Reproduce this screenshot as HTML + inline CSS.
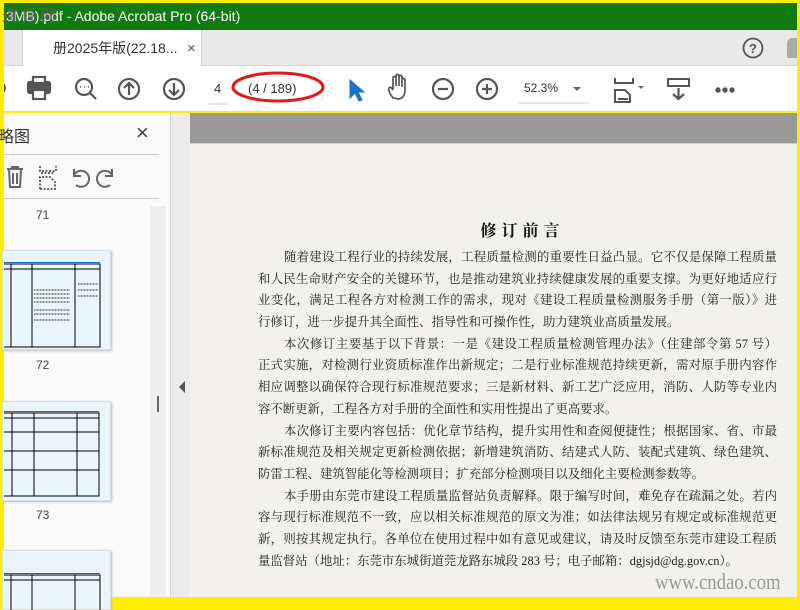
<!DOCTYPE html>
<html><head><meta charset="utf-8"><style>
*{margin:0;padding:0;box-sizing:border-box}
body{width:800px;height:600px;overflow:hidden;background:#ffee00;position:relative;font-family:"Liberation Sans","Noto Sans CJK SC",sans-serif}
.abs{position:absolute}
#title{left:4px;top:3px;width:793px;height:27px;background:#117a11;color:#fff;font-size:14px;line-height:27px;padding-left:2px}
#tabs{left:4px;top:30px;width:793px;height:36px;background:#e9e9e9;border-bottom:1px solid #d4d4d4}
#tab{left:18px;top:0;width:180px;height:36px;background:#fff;border-left:1px solid #d0d0d0;border-right:1px solid #d0d0d0;font-size:14px;color:#333;line-height:37px;padding-left:30px}
#tool{left:4px;top:66px;width:793px;height:46px;background:#fff;border-bottom:1px solid #d8d8d8}
#side{left:4px;top:113px;width:166px;height:484px;background:#fafafa}
#strip{left:170px;top:113px;width:20px;height:484px;background:#ebebeb;border-left:1px solid #d0d0d0}
#doc{left:190px;top:113px;width:607px;height:484px;background:#f2f1ee}
#band{left:190px;top:113px;width:607px;height:31px;background:#999;border-bottom:1px solid #ccc}
.txt{font-family:"Liberation Serif","Noto Serif CJK SC",serif;font-size:12.4px;color:#222;width:519px;left:258px;letter-spacing:0}
.l{height:21.7px;line-height:21.7px;text-align:justify;text-align-last:justify;white-space:nowrap;overflow:hidden}
.n{text-align-last:left}
.th{background:#e9f5fc;border:1px solid #ddd;box-shadow:1px 1px 2px #bbb}
.num{font-size:12px;color:#444}
</style></head><body>
<div id="title" class="abs">3MB).pdf - Adobe Acrobat Pro (64-bit)</div>
<div id="tabs" class="abs"><div id="tab" class="abs">册2025年版(22.18... <span style="position:absolute;left:164px;top:0;font-size:15px;color:#555">×</span></div>
<svg class="abs" style="left:738px;top:7px" width="22" height="22"><circle cx="11" cy="11" r="9.5" fill="none" stroke="#555" stroke-width="1.8"/><text x="11" y="16" font-size="13" text-anchor="middle" fill="#555" font-family="Liberation Sans" font-weight="bold">?</text></svg>
<div class="abs" style="left:783px;top:8px;width:10px;height:20px;background:#aaa;border-radius:5px 0 0 2px"></div>
</div>
<div id="tool" class="abs">
<svg class="abs" style="left:0;top:0" width="793" height="46" fill="none" stroke="#555" stroke-width="2.2">
<path d="M-2 17 a6 6 0 0 1 0 10" />
<rect x="24" y="16" width="22" height="11" rx="2" fill="#555"/><rect x="29" y="11" width="12" height="6" fill="#fff"/><rect x="29" y="24" width="12" height="9" fill="#fff"/>
<circle cx="80" cy="21" r="8"/><path d="M86 27 l6 6"/><path d="M76 21h1M80 21h1M84 21h1" stroke-width="1.5"/>
<circle cx="125" cy="23" r="10"/><path d="M125 29v-12M120 22l5-5 5 5"/>
<circle cx="170" cy="23" r="10"/><path d="M170 17v12M165 24l5 5 5-5"/>
<path d="M205 38h18" stroke="#ccc" stroke-width="1"/>
<path d="M318 12v24" stroke="#ddd" stroke-width="1"/>
<path d="M346 14v18l5-5 4 8 3-1-4-8h6z" fill="#1a73c8" stroke="#1a73c8" stroke-width="1"/>
<path d="M389 32c-3-4-5-8-4-10s3 0 4 2v-12c0-2 3-2 3 0v8v-10c0-2 3-2 3 0v10v-9c0-2 3-2 3 0v10v-7c0-2 3-2 3 0v10c0 5-2 8-6 9z" stroke-width="1.7"/>
<circle cx="439" cy="23" r="10"/><path d="M434 23h10"/>
<circle cx="483" cy="23" r="10"/><path d="M478 23h10M483 18v10"/>
<path d="M515 37h70" stroke="#ccc" stroke-width="1"/>
<path d="M569 21l4 4 4-4z" fill="#666" stroke="none"/>
<path d="M611 12v5h18v-5M611 36v-12h10l5 5v7h-15zM614 33h10" stroke-width="2"/>
<path d="M634 20l3 3 3-3z" fill="#666" stroke="none"/>
<rect x="664" y="13" width="21" height="7" stroke-width="2"/><path d="M674.5 22v11M669 28l5.5 5 5.5-5"/>
<circle cx="714" cy="24" r="1.6" fill="#555"/><circle cx="721" cy="24" r="1.6" fill="#555"/><circle cx="728" cy="24" r="1.6" fill="#555"/>
</svg>
<div class="abs" style="left:210px;top:15px;font-size:13px;color:#333">4</div>
<div class="abs" style="left:244px;top:15px;font-size:13px;color:#333">(4 / 189)</div>
<div class="abs" style="left:520px;top:15px;font-size:12px;color:#333">52.3%</div>
<svg class="abs" style="left:226px;top:3px" width="96" height="36"><ellipse cx="48" cy="18" rx="45" ry="14" fill="none" stroke="#e0191b" stroke-width="3"/></svg>
</div>
<div class="abs" style="left:2px;top:2px;font-size:16px;color:rgba(120,90,130,.55);font-weight:bold;font-family:'Noto Sans CJK SC',sans-serif;letter-spacing:3px">道标网</div>
<div id="side" class="abs">
<div class="abs" style="left:-6px;top:10px;font-size:16px;color:#333">略图</div>
<div class="abs" style="left:132px;top:7px;font-size:22px;color:#444">×</div>
<div class="abs" style="left:0;top:41px;width:155px;height:1px;background:#ccc"></div>
<svg class="abs" style="left:0;top:50px" width="140" height="30" fill="none" stroke="#666" stroke-width="2">
<path d="M3 6h16M8 6v-2h6v2M5 6l1 18h10l1-18M9 10v11M13 10v11"/>
<path d="M36 3v5h16v-5M36 26v-12h10l5 5v7h-15zM37 10h14" stroke-dasharray="2 1.5"/>
<path d="M72 22a8 8 0 1 0 -2 -10M70 6v7h7"/>
<path d="M106 22a8 8 0 1 1 2 -10M108 6v7h-7"/>
</svg>
<div class="abs" style="left:0;top:85px;width:155px;height:1px;background:#ccc"></div>
<div class="abs" style="left:146px;top:93px;width:16px;height:391px;background:#f0efed"></div>
<div class="abs" style="left:153px;top:283px;width:2px;height:16px;background:#666"></div>
<div class="abs num" style="left:32px;top:95px">71</div>
<div class="abs th" style="left:-2px;top:137px;width:109px;height:100px"></div>
<div class="abs num" style="left:32px;top:245px">72</div>
<div class="abs th" style="left:-2px;top:288px;width:109px;height:100px"></div>
<div class="abs num" style="left:32px;top:395px">73</div>
<div class="abs th" style="left:-2px;top:437px;width:109px;height:60px"></div>
<svg class="abs" style="left:0;top:137px" width="110" height="360" fill="none" stroke="#000" stroke-width="1">
<path d="M0 14h96v83h-96M7 14v83M28 14v83M71 14v83M0 19h96" /><path d="M0 12.5h96" stroke="#1a6fc0"/>
<path d="M30 40h36M30 44h36M30 48h36M30 52h36M30 60h36M30 64h36M30 70h36M74 34h20M74 40h20M74 46h20" stroke="#555" stroke-width="1.2" stroke-dasharray="1 .5"/>
<path d="M0 163h95v83h-95M8 163v83M30 163v83M73 163v83M0 168h95M0 182h95M0 201h95M0 220h95" />
<path d="M0 161.5h95" stroke="#1a6fc0"/>
<path d="M0 325h96v40M7 325v40M28 325v40M71 325v40M0 330h96"/><path d="M0 323.5h96" stroke="#1a6fc0"/>
</svg>
</div>
<div id="strip" class="abs"><svg class="abs" style="left:7px;top:268px" width="8" height="12"><path d="M7 0v12l-6-6z" fill="#555"/></svg></div>
<div id="doc" class="abs"></div>
<div id="band" class="abs"></div>
<div class="abs" style="left:190px;top:218px;width:665px;text-align:center;font-family:'Liberation Serif','Noto Serif CJK SC',serif;font-size:16px;font-weight:bold;color:#111;letter-spacing:5px">修订前言</div>
<div class="abs txt" style="top:247px">
<div class="l" style="padding-left:26px">随着建设工程行业的持续发展，工程质量检测的重要性日益凸显。它不仅是保障工程质量</div>
<div class="l">和人民生命财产安全的关键环节，也是推动建筑业持续健康发展的重要支撑。为更好地适应行</div>
<div class="l">业变化，满足工程各方对检测工作的需求，现对《建设工程质量检测服务手册（第一版）》进</div>
<div class="l n">行修订，进一步提升其全面性、指导性和可操作性，助力建筑业高质量发展。</div>
<div class="l" style="padding-left:26px">本次修订主要基于以下背景：一是《建设工程质量检测管理办法》（住建部令第 57 号）</div>
<div class="l">正式实施，对检测行业资质标准作出新规定；二是行业标准规范持续更新，需对原手册内容作</div>
<div class="l">相应调整以确保符合现行标准规范要求；三是新材料、新工艺广泛应用，消防、人防等专业内</div>
<div class="l n">容不断更新，工程各方对手册的全面性和实用性提出了更高要求。</div>
<div class="l" style="padding-left:26px">本次修订主要内容包括：优化章节结构，提升实用性和查阅便捷性；根据国家、省、市最</div>
<div class="l">新标准规范及相关规定更新检测依据；新增建筑消防、结建式人防、装配式建筑、绿色建筑、</div>
<div class="l n">防雷工程、建筑智能化等检测项目；扩充部分检测项目以及细化主要检测参数等。</div>
<div class="l" style="padding-left:26px">本手册由东莞市建设工程质量监督站负责解释。限于编写时间，难免存在疏漏之处。若内</div>
<div class="l">容与现行标准规范不一致，应以相关标准规范的原文为准；如法律法规另有规定或标准规范更</div>
<div class="l">新，则按其规定执行。各单位在使用过程中如有意见或建议，请及时反馈至东莞市建设工程质</div>
<div class="l n">量监督站（地址：东莞市东城街道莞龙路东城段 283 号；电子邮箱：dgjsjd@dg.gov.cn）。</div>
</div>
<div class="abs" style="left:655px;top:569px;font-family:'Liberation Serif',serif;font-size:22px;color:#999;transform:scaleX(.85);transform-origin:left">www.cndao.com</div>
</body></html>
